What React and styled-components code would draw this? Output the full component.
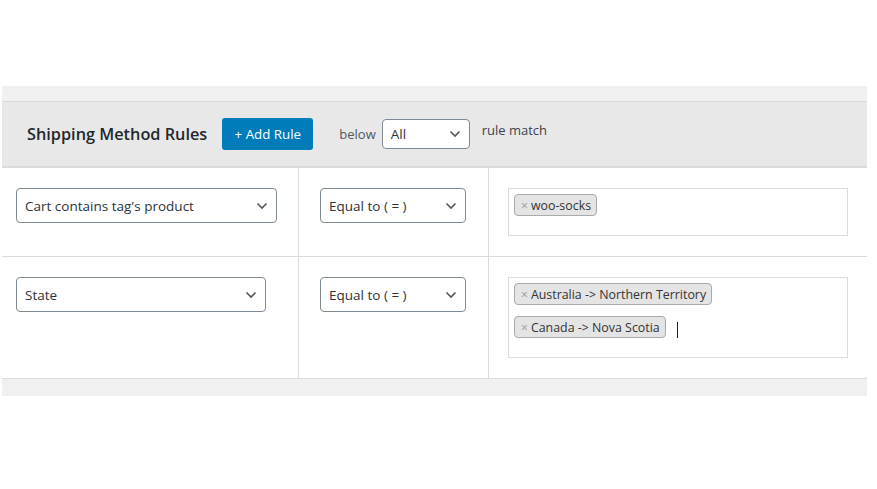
import React from "react";
import styled, { createGlobalStyle } from "styled-components";

const GlobalStyle = createGlobalStyle`
  html, body { margin: 0; padding: 0; background: #fff; }
  body { font-family: "Open Sans", "Noto Sans", Arial, sans-serif; color: #2c3338; }
  * { box-sizing: border-box; }
`;

const Page = styled.div`
  padding: 86px 0 0 2px;
`;

const Panel = styled.section`
  width: 865px;
`;

const TopBand = styled.div`
  height: 16px;
  background: #f0f0f0;
  border-bottom: 1px solid #dadada;
`;

const Header = styled.div`
  height: 66px;
  background: #e8e8e8;
  border-bottom: 2px solid #dadada;
  display: flex;
  align-items: center;
  padding-left: 25px;
`;

const Title = styled.h2`
  margin: 0 15px 0 0;
  font-size: 16.3px;
  font-weight: 600;
  color: #23282d;
`;

const AddButton = styled.button`
  height: 32px;
  width: 91px;
  border: none;
  border-radius: 3px;
  background: #007cba;
  color: #fff;
  font-family: inherit;
  font-size: 13.3px;
  padding: 0;
  cursor: pointer;
`;

const Label = styled.span`
  font-size: 13px;
  color: ${(p) => p.$color || "#50575e"};
  margin: ${(p) => p.$margin || "0"};
`;

const SelectBox = styled.div`
  width: ${(p) => p.$w}px;
  height: ${(p) => p.$h || 35}px;
  border: 1px solid #7e8993;
  border-radius: 4px;
  background: #fff;
  display: flex;
  align-items: center;
  justify-content: space-between;
  padding: 0 8px 0 8px;
  font-size: 13.5px;
  color: #2c3338;
`;

const Chevron = () => (
  <svg width="12" height="8" viewBox="0 0 12 8">
    <path d="M1.5 1.5 L6 6 L10.5 1.5" fill="none" stroke="#50575e" strokeWidth="1.6" />
  </svg>
);

const Select = ({ w, h, children }) => (
  <SelectBox $w={w} $h={h}>
    <span>{children}</span>
    <Chevron />
  </SelectBox>
);

const Row = styled.div`
  display: grid;
  grid-template-columns: 297px 190px 1fr;
  border-bottom: 1px solid #dcdcdc;
`;

const Cell = styled.div`
  padding: 20px 0 20px ${(p) => p.$pl}px;
  border-right: ${(p) => (p.$last ? "none" : "1px solid #dcdcdc")};
`;

const TokenBox = styled.div`
  width: 340px;
  border: 1px solid #dcdcdc;
  background: #fff;
  padding: 5px 5px 19px;
  display: flex;
  flex-wrap: wrap;
  align-items: flex-start;
  row-gap: 11px;
`;

const Tag = styled.span`
  height: 22px;
  display: inline-flex;
  align-items: center;
  background: #e4e4e4;
  border: 1px solid #aaa;
  border-radius: 4px;
  padding: 0 5px 0 6px;
  font-size: 12.4px;
  color: #333;
  white-space: nowrap;
  margin-right: 5px;
`;

const Remove = styled.span`
  color: #999;
  font-size: 12px;
  margin-right: 3px;
`;

const Caret = styled.span`
  width: 1px;
  height: 16px;
  background: #222;
  margin: 6px 0 0 6px;
`;

const BottomBand = styled.div`
  height: 17px;
  background: #f0f0f0;
`;

export default function App() {
  return (
    <Page>
      <GlobalStyle />
      <Panel>
        <TopBand />
        <Header>
          <Title>Shipping Method Rules</Title>
          <AddButton>+ Add Rule</AddButton>
          <Label $margin="0 6px 0 26px">below</Label>
          <Select w={88} h={30}>All</Select>
          <Label $color="#3c434a" $margin="-8px 0 0 12px">rule match</Label>
        </Header>
        <Row>
          <Cell $pl={14}>
            <Select w={261}>Cart contains tag's product</Select>
          </Cell>
          <Cell $pl={21}>
            <Select w={146}>Equal to ( = )</Select>
          </Cell>
          <Cell $pl={19} $last>
            <TokenBox>
              <Tag><Remove>×</Remove>woo-socks</Tag>
            </TokenBox>
          </Cell>
        </Row>
        <Row>
          <Cell $pl={14}>
            <Select w={250}>State</Select>
          </Cell>
          <Cell $pl={21}>
            <Select w={146}>Equal to ( = )</Select>
          </Cell>
          <Cell $pl={19} $last>
            <TokenBox>
              <Tag><Remove>×</Remove>Australia -&gt; Northern Territory</Tag>
              <Tag><Remove>×</Remove>Canada -&gt; Nova Scotia</Tag>
              <Caret />
            </TokenBox>
          </Cell>
        </Row>
        <BottomBand />
      </Panel>
    </Page>
  );
}
